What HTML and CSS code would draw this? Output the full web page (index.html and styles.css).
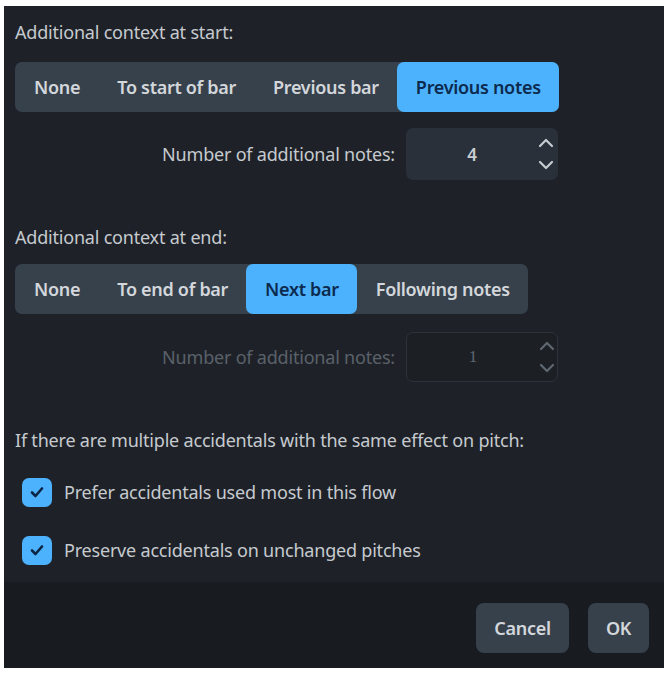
FILE: index.html
```html
<!DOCTYPE html>
<html>
<head>
<meta charset="utf-8">
<link rel="stylesheet" href="styles.css">
</head>
<body>
<div class="dialog">
  <div class="main">
    <div class="label first">Additional context at start:</div>
    <div class="seg">
      <div class="item">None</div>
      <div class="item">To start of bar</div>
      <div class="item">Previous bar</div>
      <div class="item sel">Previous notes</div>
    </div>
    <div class="row r1">
      <span class="rlabel">Number of additional notes:</span>
      <div class="spin">
        <span class="val">4</span>
        <svg class="arrows" width="16" height="36" viewBox="0 0 16 36"><path d="M2 10 L8 4 L14 10" fill="none" stroke="currentColor" stroke-width="2.2" stroke-linecap="round" stroke-linejoin="round"/><path d="M2 26 L8 32 L14 26" fill="none" stroke="currentColor" stroke-width="2.2" stroke-linecap="round" stroke-linejoin="round"/></svg>
      </div>
    </div>
    <div class="label second">Additional context at end:</div>
    <div class="seg seg2">
      <div class="item">None</div>
      <div class="item">To end of bar</div>
      <div class="item sel">Next bar</div>
      <div class="item">Following notes</div>
    </div>
    <div class="row r2 disabled">
      <span class="rlabel">Number of additional notes:</span>
      <div class="spin">
        <span class="val">1</span>
        <svg class="arrows" width="16" height="36" viewBox="0 0 16 36"><path d="M2 10 L8 4 L14 10" fill="none" stroke="currentColor" stroke-width="2.2" stroke-linecap="round" stroke-linejoin="round"/><path d="M2 26 L8 32 L14 26" fill="none" stroke="currentColor" stroke-width="2.2" stroke-linecap="round" stroke-linejoin="round"/></svg>
      </div>
    </div>
    <div class="label third">If there are multiple accidentals with the same effect on pitch:</div>
    <div class="check c1">
      <span class="box"><svg width="18" height="18" viewBox="0 0 18 18"><path d="M4 9.5 L7.5 13 L14 5.5" fill="none" stroke="#0c2544" stroke-width="2.6" stroke-linecap="round" stroke-linejoin="round"/></svg></span>
      <span class="ctext">Prefer accidentals used most in this flow</span>
    </div>
    <div class="check c2">
      <span class="box"><svg width="18" height="18" viewBox="0 0 18 18"><path d="M4 9.5 L7.5 13 L14 5.5" fill="none" stroke="#0c2544" stroke-width="2.6" stroke-linecap="round" stroke-linejoin="round"/></svg></span>
      <span class="ctext">Preserve accidentals on unchanged pitches</span>
    </div>
  </div>
  <div class="footer">
    <button class="btn cancel">Cancel</button>
    <button class="btn ok">OK</button>
  </div>
</div>
</body>
</html>
```
FILE: styles.css
```css
html, body {
  margin: 0;
  padding: 0;
  background: #ffffff;
}
body {
  padding: 6px 4px 5px 4px;
  font-family: "Noto Sans", "Open Sans", sans-serif;
  font-size: 18px;
}
.dialog {
  width: 660px;
  height: 662px;
  background: #1e2228;
  display: flex;
  flex-direction: column;
}
.main {
  flex: 1;
  padding: 15px 11px 0 11px;
}
.label {
  color: #c6cacf;
  line-height: 22px;
  height: 22px;
  letter-spacing: -0.2px;
}
.label.second { margin-top: 46px; }
.label.third { margin-top: 47px; }
.seg {
  margin-top: 19px;
  display: inline-flex;
  height: 50px;
  background: #37414c;
  border-radius: 7px;
}
.seg2 { margin-top: 16px; }
.item {
  display: flex;
  align-items: center;
  padding: 0 18px 0 19px;
  color: #d3d7db;
  font-weight: 600;
  letter-spacing: -0.3px;
  border-radius: 7px;
}
.item.sel {
  background: #4db2fd;
  color: #0c2a4e;
}
.row {
  width: 543px;
  display: flex;
  justify-content: flex-end;
  align-items: center;
  gap: 11px;
}
.r1 { margin-top: 16px; height: 52px; }
.r2 { margin-top: 18px; height: 50px; }
.rlabel {
  color: #c6cacf;
  letter-spacing: -0.2px;
}
.spin {
  width: 152px;
  height: 100%;
  box-sizing: border-box;
  background: #29303a;
  border-radius: 7px;
  display: flex;
  align-items: center;
  color: #c8ccd1;
}
.val {
  width: 132px;
  text-align: center;
  font-weight: 600;
  font-size: 17px;
}
.arrows {
  color: #c8ccd1;
}
.disabled .rlabel { color: #5a616a; }
.disabled .spin {
  background: #1c2025;
  border: 1px solid #2d333b;
  color: #5f6771;
}
.disabled .val { font-family: "Liberation Serif", serif; font-weight: 400; }
.disabled .arrows { color: #5f6771; }
.check {
  display: flex;
  align-items: center;
  gap: 12px;
  height: 28px;
  padding-left: 7px;
}
.c1 { margin-top: 27px; }
.c2 { margin-top: 30px; }
.box {
  width: 30px;
  height: 29px;
  background: #4db2fd;
  border-radius: 7px;
  display: flex;
  align-items: center;
  justify-content: center;
}
.ctext {
  color: #c6cacf;
  letter-spacing: -0.2px;
}
.footer {
  height: 86px;
  background: #181b20;
  display: flex;
  justify-content: flex-end;
  align-items: flex-start;
  padding: 21px 15px 0 0;
  box-sizing: border-box;
  gap: 19px;
}
.btn {
  height: 50px;
  border: none;
  background: #37414c;
  color: #d3d7db;
  border-radius: 8px;
  font-family: "Noto Sans", "Open Sans", sans-serif;
  font-size: 18px;
  font-weight: 600;
  letter-spacing: -0.3px;
}
.cancel { width: 93px; }
.ok { width: 61px; }
```
